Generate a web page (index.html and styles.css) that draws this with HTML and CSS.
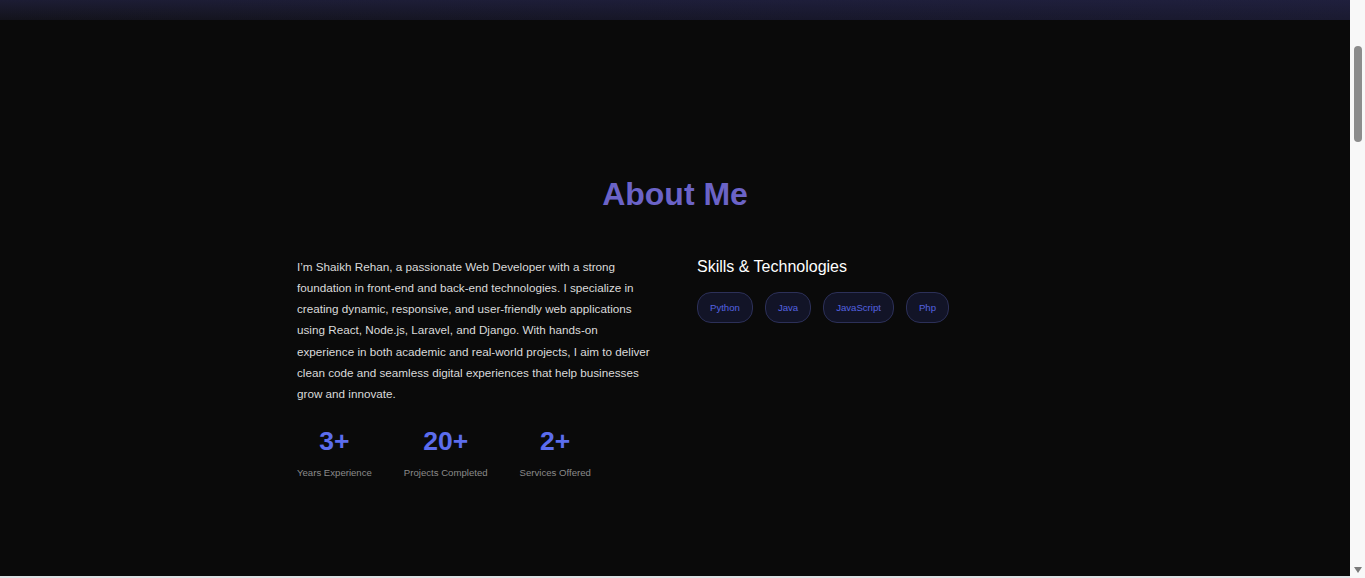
FILE: index.html
```html
<!DOCTYPE html>
<html lang="en">
<head>
<meta charset="utf-8">
<title>About Me</title>
<link rel="stylesheet" href="styles.css">
</head>
<body>
<div class="window">
  <div class="page">
    <div class="viewport">
      <div class="topbar"></div>
      <section class="about">
        <h2 class="about-title">About Me</h2>
        <div class="about-grid">
          <div class="about-text">
            <p class="bio">I’m Shaikh Rehan, a passionate Web Developer with a strong foundation in front-end and back-end technologies. I specialize in creating dynamic, responsive, and user-friendly web applications using React, Node.js, Laravel, and Django. With hands-on experience in both academic and real-world projects, I aim to deliver clean code and seamless digital experiences that help businesses grow and innovate.</p>
            <div class="stats">
              <div class="stat"><div class="stat-num">3+</div><div class="stat-label">Years Experience</div></div>
              <div class="stat"><div class="stat-num">20+</div><div class="stat-label">Projects Completed</div></div>
              <div class="stat"><div class="stat-num">2+</div><div class="stat-label">Services Offered</div></div>
            </div>
          </div>
          <div class="skills">
            <h3 class="skills-title">Skills &amp; Technologies</h3>
            <div class="pills">
              <span class="pill">Python</span>
              <span class="pill">Java</span>
              <span class="pill">JavaScript</span>
              <span class="pill">Php</span>
            </div>
          </div>
        </div>
      </section>
    </div>
    <div class="hline"></div>
  </div>
  <div class="scrollbar">
    <div class="thumb"></div>
    <div class="arrow-down"></div>
  </div>
</div>
</body>
</html>
```
FILE: styles.css
```css
* { box-sizing: border-box; }
html, body { margin: 0; padding: 0; height: 578px; overflow: hidden; }
body {
  background: #0a0a0a;
  font-family: "Liberation Sans", Arial, sans-serif;
  color: #d4d4d4;
}
.window {
  display: flex;
  height: 578px;
}
.page {
  flex: 1;
  display: flex;
  flex-direction: column;
  min-width: 0;
}
.viewport {
  flex: 1;
  overflow: hidden;
  background: #0a0a0a;
}
.hline {
  height: 2px;
  background: #dde1e4;
}
.topbar {
  height: 20px;
  background:
    linear-gradient(180deg, rgba(36, 36, 72, 0.55) 0%, rgba(0, 0, 0, 0) 100%),
    linear-gradient(90deg, #13131b 0%, #17172a 60%, #1a1a30 100%);
}
.about {
  padding-top: 156px;
}
.about-title {
  margin: 0 0 43px;
  text-align: center;
  font-size: 32px;
  font-weight: 700;
  color: #6b63c7;
  line-height: normal;
}
.about-grid {
  width: 756px;
  margin: 0 auto;
  display: grid;
  grid-template-columns: 358px 1fr;
  column-gap: 42px;
}
.bio {
  margin: 0;
  font-size: 11.7px;
  line-height: 21.15px;
  color: #dadada;
}
.stats {
  display: flex;
  gap: 32px;
  margin-top: 22px;
}
.stat { text-align: center; }
.stat-num {
  font-size: 26.5px;
  font-weight: 700;
  color: #5c6ded;
  line-height: normal;
}
.stat-label {
  margin-top: 10px;
  font-size: 9.6px;
  color: #8a8a8a;
  line-height: normal;
}
.skills-title {
  margin: 2px 0 16px;
  font-size: 16px;
  font-weight: 400;
  color: #ffffff;
  line-height: normal;
}
.pills {
  display: flex;
  flex-wrap: wrap;
  gap: 12px;
}
.pill {
  display: inline-block;
  padding: 9px 12px;
  font-size: 9.6px;
  line-height: 11px;
  color: #5462e0;
  background: #121427;
  border: 1px solid #2c3058;
  border-radius: 14px;
}
.scrollbar {
  width: 15px;
  background: #f8f8f8;
  display: flex;
  flex-direction: column;
  align-items: center;
  padding: 46px 0 5px 1px;
}
.thumb {
  width: 8px;
  height: 96px;
  border-radius: 4px;
  background: #8c8c8c;
}
.arrow-down {
  margin-top: auto;
  width: 0;
  height: 0;
  border-left: 4.5px solid transparent;
  border-right: 4.5px solid transparent;
  border-top: 6px solid #7a7a7a;
}
```
